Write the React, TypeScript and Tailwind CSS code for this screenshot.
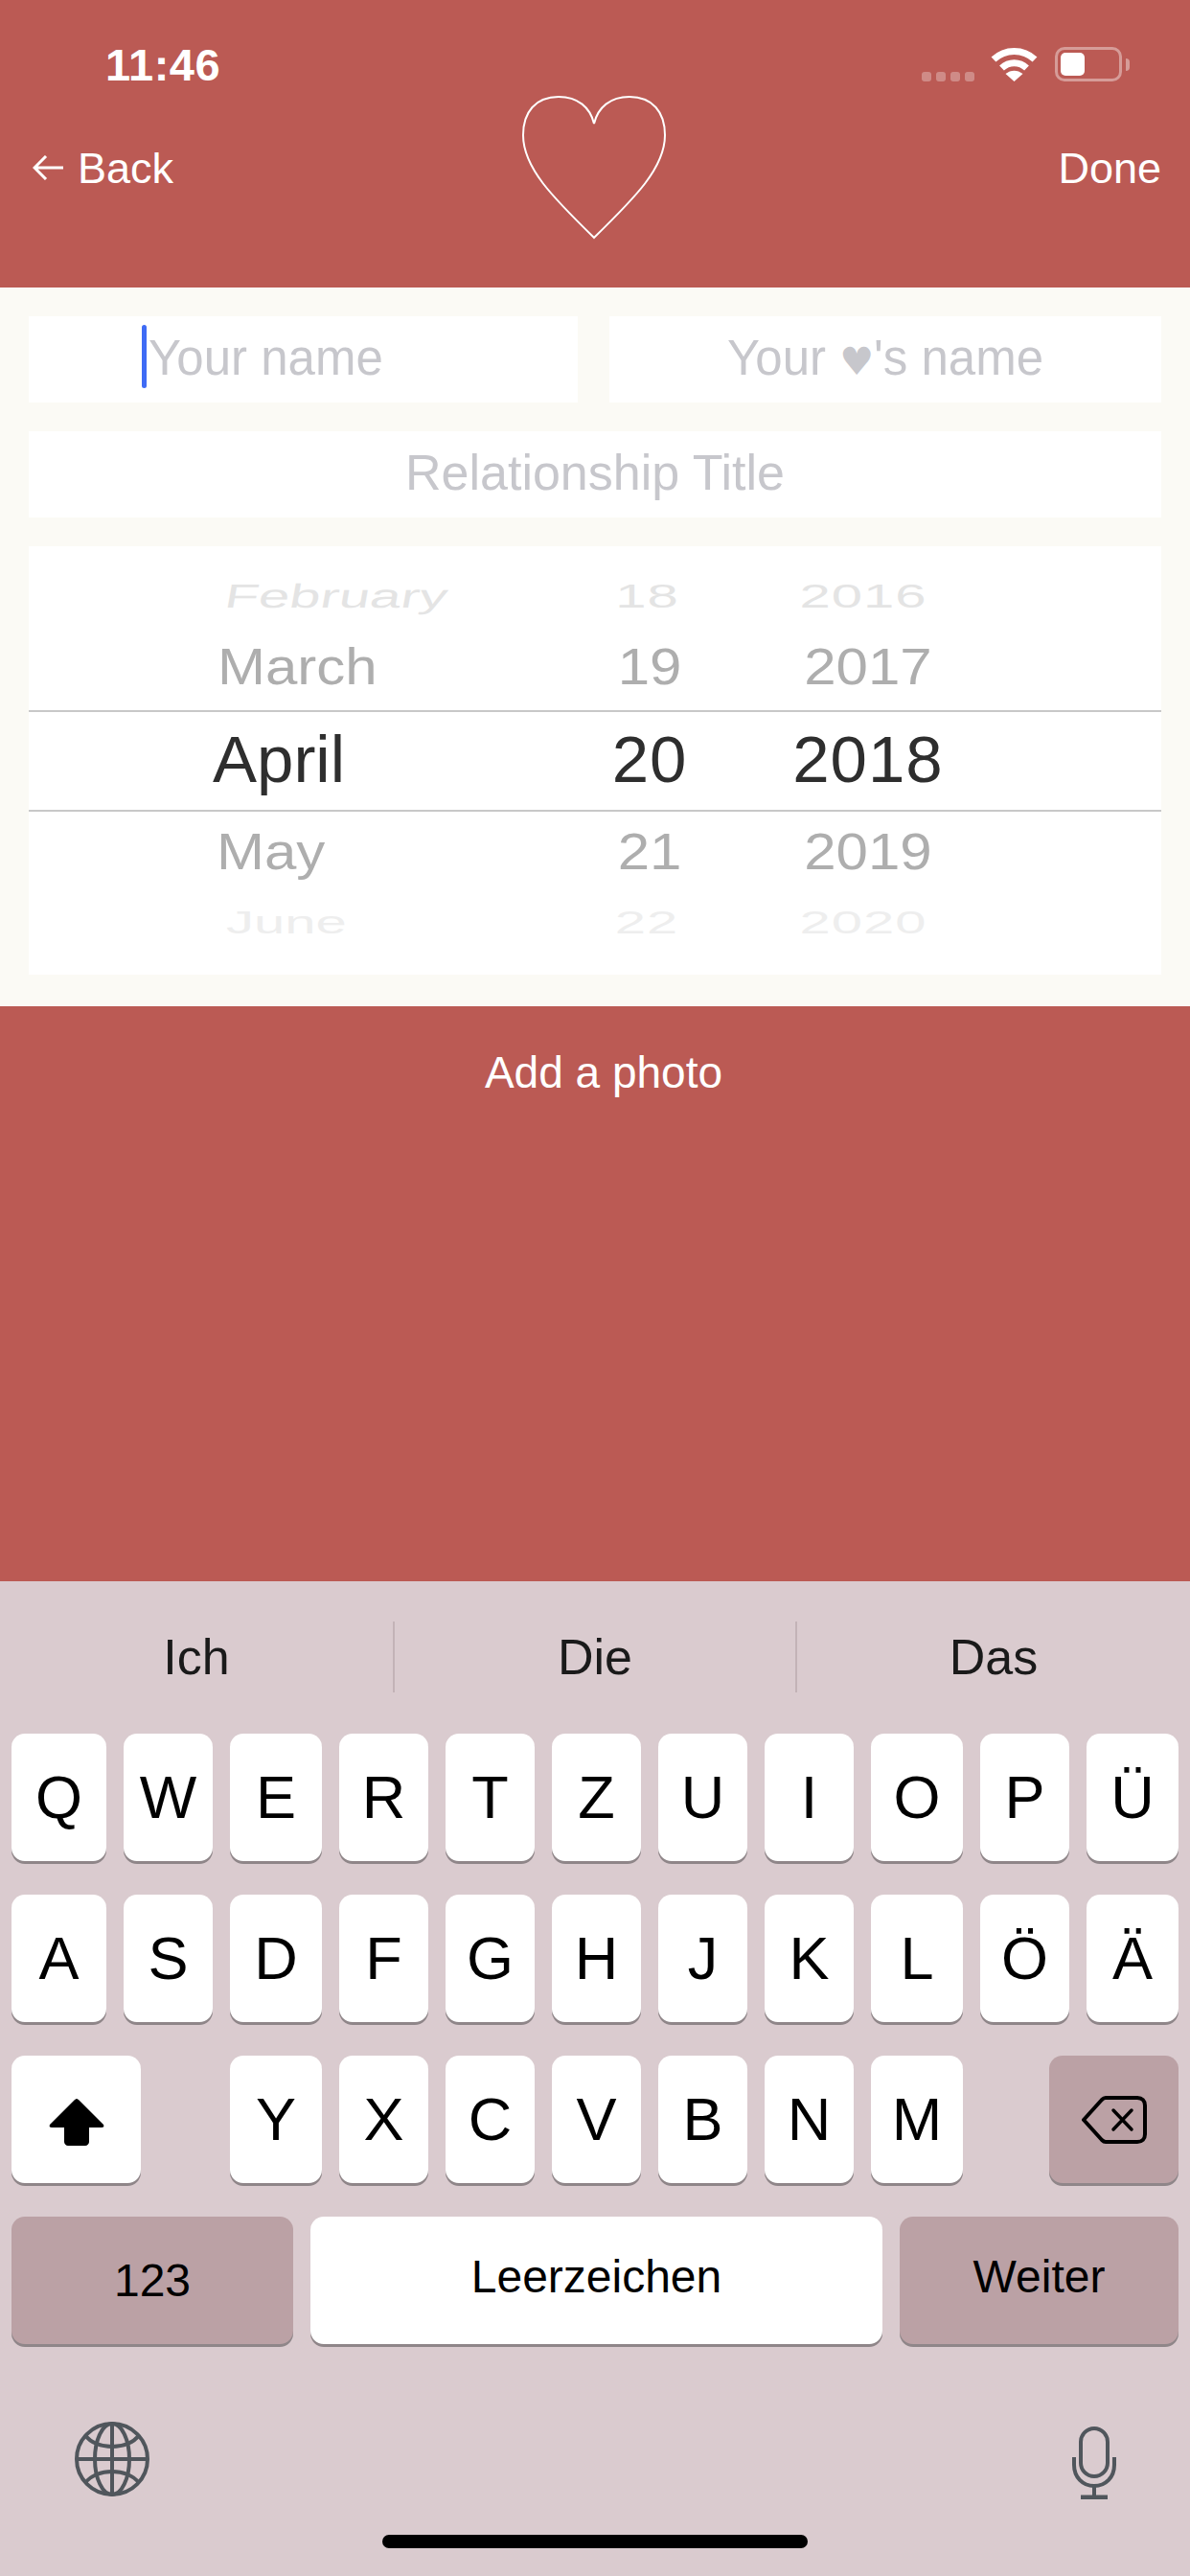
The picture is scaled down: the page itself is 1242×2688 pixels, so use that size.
import React from "react"

type WheelRow = {
  month: string
  day: string
  year: string
  row: string
  text: string
  monthClass: string
  dayClass: string
  yearClass: string
}

const wheelRows: WheelRow[] = [
  {
    month: "February",
    day: "18",
    year: "2016",
    row: "h-[52px]",
    text: "text-[#e4e4e4] text-[58px] scale-y-[0.6]",
    monthClass: "ml-[205px] -skew-x-6",
    dayClass: "-ml-[5px] tracking-[1px]",
    yearClass: "-ml-[10px] tracking-[1px]",
  },
  {
    month: "March",
    day: "19",
    year: "2017",
    row: "h-[97px] pt-[5px]",
    text: "text-[#aeaeae] text-[60px] scale-y-[0.88]",
    monthClass: "ml-[197px]",
    dayClass: "",
    yearClass: "",
  },
  {
    month: "April",
    day: "20",
    year: "2018",
    row: "h-[106px] border-y-2 border-[#c8c8c8] -mt-[1px] pb-[4px]",
    text: "text-[#2e2e2e] text-[69px]",
    monthClass: "ml-[192px]",
    dayClass: "tracking-[1px]",
    yearClass: "tracking-[1px]",
  },
  {
    month: "May",
    day: "21",
    year: "2019",
    row: "h-[84px]",
    text: "text-[#aeaeae] text-[60px] scale-y-[0.88]",
    monthClass: "ml-[196px]",
    dayClass: "",
    yearClass: "",
  },
  {
    month: "June",
    day: "22",
    year: "2020",
    row: "h-[64px] pb-[2px]",
    text: "text-[#eeeeee] text-[58px] scale-y-[0.58]",
    monthClass: "ml-[206px]",
    dayClass: "-ml-[6px] tracking-[1px]",
    yearClass: "-ml-[10px] tracking-[1px]",
  },
]

function Key({ label, width }: { label: string; width: string }) {
  return (
    <div className={`${width} h-[133px] bg-white rounded-[14px] shadow-[0_3px_0_#8f8689] flex items-center justify-center text-[63px] leading-none text-black`}>
      {label}
    </div>
  )
}

function Wifi() {
  return (
    <svg width="49" height="36" viewBox="0 0 49 36" fill="none">
      <path d="M3 13 C15 1.5 34 1.5 46 13" stroke="white" strokeWidth="7" />
      <path d="M11.5 22 C19 15 30 15 37.5 22" stroke="white" strokeWidth="7" />
      <path d="M24.5 36 L15.5 28 C21 23.5 28 23.5 33.5 28 Z" fill="white" />
    </svg>
  )
}

function Battery() {
  return (
    <div className="flex items-center">
      <div className="w-[70px] h-[36px] rounded-[10px] border-[3px] border-white/40 p-[3px]">
        <div className="w-[25px] h-full rounded-[5px] bg-white" />
      </div>
      <div className="ml-[4px] w-[4px] h-[13px] rounded-r-full bg-white/40" />
    </div>
  )
}

function Globe() {
  return (
    <svg width="78" height="78" viewBox="0 0 78 78" fill="none" stroke="#50565c" strokeWidth="4">
      <circle cx="39" cy="39" r="37" />
      <ellipse cx="39" cy="39" rx="18" ry="37" />
      <path d="M39 2 V76 M2 39 H76" />
      <path d="M11 14 C22 30 56 30 67 14" />
      <path d="M11 64 C22 48 56 48 67 64" />
    </svg>
  )
}

function Mic() {
  return (
    <svg width="46" height="76" viewBox="0 0 46 76" fill="none" stroke="#50565c" strokeWidth="4" className="mt-[5px]">
      <rect x="9" y="2" width="28" height="50" rx="14" />
      <path d="M2 32 V40 C2 53 11 62 23 62 C35 62 44 53 44 40 V32" />
      <path d="M23 62 V73" />
      <path d="M9 74 H37" strokeWidth="5" />
    </svg>
  )
}

export default function App() {
  return (
    <div className="w-[1242px] h-[2688px] overflow-hidden flex flex-col bg-[#fbfaf5] font-['Liberation_Sans',Arial,sans-serif]">
      {/* header */}
      <div className="h-[300px] bg-[#bb5a54] text-white shrink-0">
        <div className="h-[100px] flex justify-between pt-[49px] pl-[110px] pr-[63px]">
          <div className="text-[47px] leading-[38px] font-bold tracking-[0.5px]">11:46</div>
          <div className="flex items-start">
            <div className="flex gap-[5px] mt-[26px]">
              <div className="w-[10px] h-[10px] rounded-[3px] bg-white/30" />
              <div className="w-[10px] h-[10px] rounded-[3px] bg-white/30" />
              <div className="w-[10px] h-[10px] rounded-[3px] bg-white/30" />
              <div className="w-[10px] h-[10px] rounded-[3px] bg-white/30" />
            </div>
            <div className="ml-[17px] mr-[18px]">
              <Wifi />
            </div>
            <Battery />
          </div>
        </div>
        <div className="h-[150px] grid grid-cols-[1fr_auto_1fr] items-center pl-[28px] pr-[30px]">
          <div className="flex items-center gap-[15px] ml-[6px] text-[45px] leading-none">
            <svg width="32" height="26" viewBox="0 0 32 26" fill="none" stroke="white" strokeWidth="3">
              <path d="M32 13 H3 M14 1 L2 13 L14 25" />
            </svg>
            <span>Back</span>
          </div>
          <svg width="150" height="150" viewBox="0 0 150 150" fill="none" stroke="white" strokeWidth="2">
            <path d="M75 29 C71 12 58 1 38 1 C14 1 1 17 1 41 C1 75 32 106 75 148 C118 106 149 75 149 41 C149 17 136 1 112 1 C92 1 79 12 75 29 Z" />
          </svg>
          <div className="justify-self-end text-[45px] leading-none">Done</div>
        </div>
      </div>

      {/* form */}
      <div className="h-[750px] shrink-0 px-[30px] pt-[30px] flex flex-col gap-[30px] text-[51px] leading-none text-[#c7c7cc]">
        <div className="flex gap-[33px]">
          <div className="w-[573px] h-[90px] bg-white flex items-center pl-[118px] pb-[4px]">
            <div className="w-[5px] h-[66px] rounded-full bg-[#3f6bf5] mr-[2px] -mt-[2px]" />
            <span>Your name</span>
          </div>
          <div className="flex-1 h-[90px] bg-white flex items-center justify-center pb-[4px]">
            <span>
              Your <span className="font-['DejaVu_Sans',sans-serif] text-[40px]">♥</span>'s name
            </span>
          </div>
        </div>
        <div className="h-[90px] bg-white flex items-center justify-center pb-[4px] text-[52px]">Relationship Title</div>
        <div className="h-[447px] bg-white pt-[23px]">
          {wheelRows.map((r) => (
            <div key={r.month} className={`${r.row} grid grid-cols-[540px_216px_240px] items-center`}>
              <div className={`${r.text} ${r.monthClass} leading-none origin-left`}>{r.month}</div>
              <div className={`${r.text} ${r.dayClass} leading-none text-center`}>{r.day}</div>
              <div className={`${r.text} ${r.yearClass} leading-none text-center`}>{r.year}</div>
            </div>
          ))}
        </div>
      </div>

      {/* add photo */}
      <div className="h-[600px] shrink-0 bg-[#bb5a54] text-white text-[46px] leading-none text-center pt-[46px] pl-[18px]">
        Add a photo
      </div>

      {/* keyboard */}
      <div className="flex-1 bg-[#dacbcf] flex flex-col text-black">
        <div className="h-[159px] flex items-start pt-[42px] text-[52px] leading-none text-[#1a1a1a]">
          <div className="w-[410px] h-[74px] flex items-center justify-center">Ich</div>
          <div className="w-[2px] h-[74px] bg-[#c3b3b7]" />
          <div className="w-[418px] h-[74px] flex items-center justify-center">Die</div>
          <div className="w-[2px] h-[74px] bg-[#c3b3b7]" />
          <div className="flex-1 h-[74px] flex items-center justify-center">Das</div>
        </div>

        <div className="px-[12px] flex flex-col gap-[35px]">
          <div className="flex gap-[18px]">
            <Key label="Q" width="w-[99px]" />
            <Key label="W" width="w-[93px]" />
            <Key label="E" width="w-[96px]" />
            <Key label="R" width="w-[93px]" />
            <Key label="T" width="w-[93px]" />
            <Key label="Z" width="w-[93px]" />
            <Key label="U" width="w-[93px]" />
            <Key label="I" width="w-[93px]" />
            <Key label="O" width="w-[96px]" />
            <Key label="P" width="w-[93px]" />
            <Key label="Ü" width="w-[96px]" />
          </div>
          <div className="flex gap-[18px]">
            <Key label="A" width="w-[99px]" />
            <Key label="S" width="w-[93px]" />
            <Key label="D" width="w-[96px]" />
            <Key label="F" width="w-[93px]" />
            <Key label="G" width="w-[93px]" />
            <Key label="H" width="w-[93px]" />
            <Key label="J" width="w-[93px]" />
            <Key label="K" width="w-[93px]" />
            <Key label="L" width="w-[96px]" />
            <Key label="Ö" width="w-[93px]" />
            <Key label="Ä" width="w-[96px]" />
          </div>
          <div className="flex gap-[18px]">
            <div className="w-[135px] h-[133px] mr-[75px] bg-white rounded-[14px] shadow-[0_3px_0_#8f8689] flex items-center justify-center">
              <svg width="58" height="49" viewBox="0 0 58 49" fill="black" className="mt-[6px]">
                <path d="M29 0 C30 0 31 1 32 2 L57 27 C58 29 57 30 55 30 L42 30 L42 45 C42 47 40 49 38 49 L20 49 C18 49 16 47 16 45 L16 30 L3 30 C1 30 0 29 1 27 L26 2 C27 1 28 0 29 0 Z" />
              </svg>
            </div>
            <Key label="Y" width="w-[96px]" />
            <Key label="X" width="w-[93px]" />
            <Key label="C" width="w-[93px]" />
            <Key label="V" width="w-[93px]" />
            <Key label="B" width="w-[93px]" />
            <Key label="N" width="w-[93px]" />
            <Key label="M" width="w-[96px]" />
            <div className="ml-auto w-[135px] h-[133px] bg-[#bba1a5] rounded-[14px] shadow-[0_3px_0_#8f8689] flex items-center justify-center">
              <svg width="68" height="50" viewBox="0 0 68 50" fill="none" stroke="black" strokeWidth="4" strokeLinejoin="round">
                <path d="M2 25 L21 4 C22 3 23 2 25 2 L58 2 C63 2 66 5 66 10 L66 40 C66 45 63 48 58 48 L25 48 C23 48 22 47 21 46 Z" />
                <path d="M33 15 L52 35 M52 15 L33 35" strokeLinecap="round" strokeWidth="3.5" />
              </svg>
            </div>
          </div>
          <div className="flex gap-[18px] text-[48px] leading-none">
            <div className="w-[294px] h-[133px] bg-[#bba1a5] rounded-[14px] shadow-[0_3px_0_#8f8689] flex items-center justify-center">123</div>
            <div className="w-[597px] h-[133px] bg-white rounded-[14px] shadow-[0_3px_0_#8f8689] flex items-center justify-center pb-[8px]">Leerzeichen</div>
            <div className="w-[291px] h-[133px] bg-[#bba1a5] rounded-[14px] shadow-[0_3px_0_#8f8689] flex items-center justify-center pb-[8px]">Weiter</div>
          </div>
        </div>

        <div className="mt-[81px] h-[80px] flex items-start justify-between pl-[78px] pr-[77px]">
          <Globe />
          <Mic />
        </div>
        <div className="mt-[38px] mx-auto w-[444px] h-[14px] rounded-full bg-black" />
      </div>
    </div>
  )
}
